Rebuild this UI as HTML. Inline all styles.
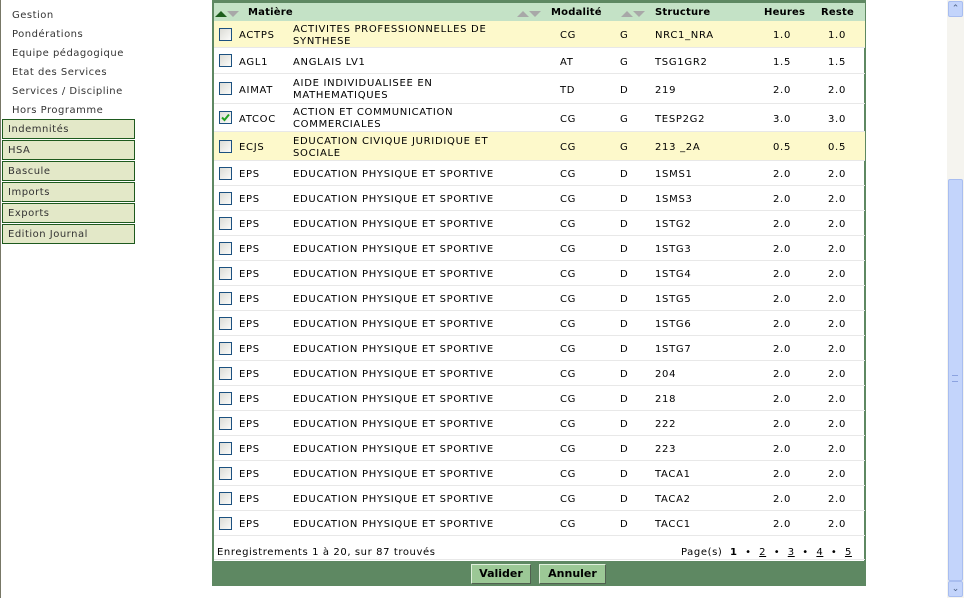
<!DOCTYPE html>
<html><head><meta charset="utf-8"><style>
*{margin:0;padding:0;box-sizing:border-box}
body{width:964px;height:598px;overflow:hidden;background:#fff;font-family:"DejaVu Sans","Liberation Sans",sans-serif;font-size:10px;color:#000;position:relative}
.a{position:absolute;white-space:nowrap}
.lm{position:absolute;left:12px;color:#333;font-size:10px;letter-spacing:.5px;margin-top:2px}
.bx{position:absolute;left:2px;width:133px;height:20px;background:#e3e8c8;border:1px solid #1e5a1e;color:#333;padding:4px 0 0 5px;letter-spacing:.5px}
.row{position:absolute;left:214px;width:651px;border-bottom:1px solid #e8e8e8}
.cb{position:absolute;left:5px;width:13px;height:13px;border:1px solid #1c5180;background:linear-gradient(135deg,#dcdcd6,#fbfbf9)}
.row span{position:absolute;line-height:12px;letter-spacing:.7px;margin-top:2px}
.h{font-weight:bold;font-size:10px;margin-top:2px;letter-spacing:.2px}
.ft{letter-spacing:.6px;margin-top:2px}
.up{display:inline-block;width:0;height:0;border-left:6px solid transparent;border-right:6px solid transparent;border-bottom:6px solid #a8a8a8}
.dn{display:inline-block;width:0;height:0;border-left:6px solid transparent;border-right:6px solid transparent;border-top:6px solid #a8a8a8}
.btn{position:absolute;top:564px;height:20px;background:#9cc896;border:1px solid;border-color:#e0f0dc #506050 #506050 #e0f0dc;font-weight:bold;font-size:11px;text-align:center;line-height:18px}
</style></head><body>
<div class="a" style="left:0;top:0;width:1px;height:598px;background:#777766"></div>
<div class="lm" style="top:8px">Gestion</div>
<div class="lm" style="top:27px">Pondérations</div>
<div class="lm" style="top:46px">Equipe pédagogique</div>
<div class="lm" style="top:65px">Etat des Services</div>
<div class="lm" style="top:84px">Services / Discipline</div>
<div class="lm" style="top:103px">Hors Programme</div>
<div class="bx" style="top:119px">Indemnités</div>
<div class="bx" style="top:140px">HSA</div>
<div class="bx" style="top:161px">Bascule</div>
<div class="bx" style="top:182px">Imports</div>
<div class="bx" style="top:203px">Exports</div>
<div class="bx" style="top:224px">Edition Journal</div>

<div class="a" style="left:212px;top:0;width:654px;height:586px;border-left:2px solid #5e8862;border-right:2px solid #5e8862;background:#fff"></div>
<div class="a" style="left:212px;top:0;width:654px;height:3px;background:#5e8862"></div>
<div class="a" style="left:214px;top:3px;width:651px;height:18px;background:#c4e2c6"></div>
<div class="a" style="left:215px;top:9px"><span class="up" style="border-bottom-color:#1d5e1d"></span><span class="dn"></span></div>
<div class="a h" style="left:248px;top:5px">Matière</div>
<div class="a" style="left:517px;top:9px"><span class="up"></span><span class="dn"></span></div>
<div class="a h" style="left:551px;top:5px">Modalité</div>
<div class="a" style="left:621px;top:9px"><span class="up"></span><span class="dn"></span></div>
<div class="a h" style="left:655px;top:5px">Structure</div>
<div class="a h" style="left:764px;top:5px">Heures</div>
<div class="a h" style="left:821px;top:5px">Reste</div>

<div class="row" style="top:21px;height:27px;background:#fdf9cb"><div class="cb" style="top:7px"></div><span style="left:25px;top:7px">ACTPS</span><span style="left:79px;top:1px">ACTIVITES PROFESSIONNELLES DE<br>SYNTHESE</span><span style="left:346px;top:7px">CG</span><span style="left:406px;top:7px">G</span><span style="left:441px;top:7px">NRC1_NRA</span><span style="left:559px;top:7px">1.0</span><span style="left:614px;top:7px">1.0</span></div>
<div class="row" style="top:48px;height:26px"><div class="cb" style="top:6px"></div><span style="left:25px;top:7px">AGL1</span><span style="left:79px;top:7px">ANGLAIS LV1</span><span style="left:346px;top:7px">AT</span><span style="left:406px;top:7px">G</span><span style="left:441px;top:7px">TSG1GR2</span><span style="left:559px;top:7px">1.5</span><span style="left:614px;top:7px">1.5</span></div>
<div class="row" style="top:74px;height:30px"><div class="cb" style="top:8px"></div><span style="left:25px;top:9px">AIMAT</span><span style="left:79px;top:2px">AIDE INDIVIDUALISEE EN<br>MATHEMATIQUES</span><span style="left:346px;top:9px">TD</span><span style="left:406px;top:9px">D</span><span style="left:441px;top:9px">219</span><span style="left:559px;top:9px">2.0</span><span style="left:614px;top:9px">2.0</span></div>
<div class="row" style="top:104px;height:28px"><div class="cb" style="top:7px"><svg width="11" height="11" style="position:absolute;left:0;top:0"><path d="M2 5.5 L4.5 8 L9 2.5" stroke="#21a121" stroke-width="2" fill="none"/></svg></div><span style="left:25px;top:8px">ATCOC</span><span style="left:79px;top:1px">ACTION ET COMMUNICATION<br>COMMERCIALES</span><span style="left:346px;top:8px">CG</span><span style="left:406px;top:8px">G</span><span style="left:441px;top:8px">TESP2G2</span><span style="left:559px;top:8px">3.0</span><span style="left:614px;top:8px">3.0</span></div>
<div class="row" style="top:132px;height:29px;background:#fdf9cb"><div class="cb" style="top:8px"></div><span style="left:25px;top:8px">ECJS</span><span style="left:79px;top:2px">EDUCATION CIVIQUE JURIDIQUE ET<br>SOCIALE</span><span style="left:346px;top:8px">CG</span><span style="left:406px;top:8px">G</span><span style="left:441px;top:8px">213 _2A</span><span style="left:559px;top:8px">0.5</span><span style="left:614px;top:8px">0.5</span></div>

<div class="row" style="top:161px;height:25px"><div class="cb" style="top:6px"></div><span style="left:25px;top:6px">EPS</span><span style="left:79px;top:6px">EDUCATION PHYSIQUE ET SPORTIVE</span><span style="left:346px;top:6px">CG</span><span style="left:406px;top:6px">D</span><span style="left:441px;top:6px">1SMS1</span><span style="left:559px;top:6px">2.0</span><span style="left:614px;top:6px">2.0</span></div>
<div class="row" style="top:186px;height:25px"><div class="cb" style="top:6px"></div><span style="left:25px;top:6px">EPS</span><span style="left:79px;top:6px">EDUCATION PHYSIQUE ET SPORTIVE</span><span style="left:346px;top:6px">CG</span><span style="left:406px;top:6px">D</span><span style="left:441px;top:6px">1SMS3</span><span style="left:559px;top:6px">2.0</span><span style="left:614px;top:6px">2.0</span></div>
<div class="row" style="top:211px;height:25px"><div class="cb" style="top:6px"></div><span style="left:25px;top:6px">EPS</span><span style="left:79px;top:6px">EDUCATION PHYSIQUE ET SPORTIVE</span><span style="left:346px;top:6px">CG</span><span style="left:406px;top:6px">D</span><span style="left:441px;top:6px">1STG2</span><span style="left:559px;top:6px">2.0</span><span style="left:614px;top:6px">2.0</span></div>
<div class="row" style="top:236px;height:25px"><div class="cb" style="top:6px"></div><span style="left:25px;top:6px">EPS</span><span style="left:79px;top:6px">EDUCATION PHYSIQUE ET SPORTIVE</span><span style="left:346px;top:6px">CG</span><span style="left:406px;top:6px">D</span><span style="left:441px;top:6px">1STG3</span><span style="left:559px;top:6px">2.0</span><span style="left:614px;top:6px">2.0</span></div>
<div class="row" style="top:261px;height:25px"><div class="cb" style="top:6px"></div><span style="left:25px;top:6px">EPS</span><span style="left:79px;top:6px">EDUCATION PHYSIQUE ET SPORTIVE</span><span style="left:346px;top:6px">CG</span><span style="left:406px;top:6px">D</span><span style="left:441px;top:6px">1STG4</span><span style="left:559px;top:6px">2.0</span><span style="left:614px;top:6px">2.0</span></div>
<div class="row" style="top:286px;height:25px"><div class="cb" style="top:6px"></div><span style="left:25px;top:6px">EPS</span><span style="left:79px;top:6px">EDUCATION PHYSIQUE ET SPORTIVE</span><span style="left:346px;top:6px">CG</span><span style="left:406px;top:6px">D</span><span style="left:441px;top:6px">1STG5</span><span style="left:559px;top:6px">2.0</span><span style="left:614px;top:6px">2.0</span></div>
<div class="row" style="top:311px;height:25px"><div class="cb" style="top:6px"></div><span style="left:25px;top:6px">EPS</span><span style="left:79px;top:6px">EDUCATION PHYSIQUE ET SPORTIVE</span><span style="left:346px;top:6px">CG</span><span style="left:406px;top:6px">D</span><span style="left:441px;top:6px">1STG6</span><span style="left:559px;top:6px">2.0</span><span style="left:614px;top:6px">2.0</span></div>
<div class="row" style="top:336px;height:25px"><div class="cb" style="top:6px"></div><span style="left:25px;top:6px">EPS</span><span style="left:79px;top:6px">EDUCATION PHYSIQUE ET SPORTIVE</span><span style="left:346px;top:6px">CG</span><span style="left:406px;top:6px">D</span><span style="left:441px;top:6px">1STG7</span><span style="left:559px;top:6px">2.0</span><span style="left:614px;top:6px">2.0</span></div>
<div class="row" style="top:361px;height:25px"><div class="cb" style="top:6px"></div><span style="left:25px;top:6px">EPS</span><span style="left:79px;top:6px">EDUCATION PHYSIQUE ET SPORTIVE</span><span style="left:346px;top:6px">CG</span><span style="left:406px;top:6px">D</span><span style="left:441px;top:6px">204</span><span style="left:559px;top:6px">2.0</span><span style="left:614px;top:6px">2.0</span></div>
<div class="row" style="top:386px;height:25px"><div class="cb" style="top:6px"></div><span style="left:25px;top:6px">EPS</span><span style="left:79px;top:6px">EDUCATION PHYSIQUE ET SPORTIVE</span><span style="left:346px;top:6px">CG</span><span style="left:406px;top:6px">D</span><span style="left:441px;top:6px">218</span><span style="left:559px;top:6px">2.0</span><span style="left:614px;top:6px">2.0</span></div>
<div class="row" style="top:411px;height:25px"><div class="cb" style="top:6px"></div><span style="left:25px;top:6px">EPS</span><span style="left:79px;top:6px">EDUCATION PHYSIQUE ET SPORTIVE</span><span style="left:346px;top:6px">CG</span><span style="left:406px;top:6px">D</span><span style="left:441px;top:6px">222</span><span style="left:559px;top:6px">2.0</span><span style="left:614px;top:6px">2.0</span></div>
<div class="row" style="top:436px;height:25px"><div class="cb" style="top:6px"></div><span style="left:25px;top:6px">EPS</span><span style="left:79px;top:6px">EDUCATION PHYSIQUE ET SPORTIVE</span><span style="left:346px;top:6px">CG</span><span style="left:406px;top:6px">D</span><span style="left:441px;top:6px">223</span><span style="left:559px;top:6px">2.0</span><span style="left:614px;top:6px">2.0</span></div>
<div class="row" style="top:461px;height:25px"><div class="cb" style="top:6px"></div><span style="left:25px;top:6px">EPS</span><span style="left:79px;top:6px">EDUCATION PHYSIQUE ET SPORTIVE</span><span style="left:346px;top:6px">CG</span><span style="left:406px;top:6px">D</span><span style="left:441px;top:6px">TACA1</span><span style="left:559px;top:6px">2.0</span><span style="left:614px;top:6px">2.0</span></div>
<div class="row" style="top:486px;height:25px"><div class="cb" style="top:6px"></div><span style="left:25px;top:6px">EPS</span><span style="left:79px;top:6px">EDUCATION PHYSIQUE ET SPORTIVE</span><span style="left:346px;top:6px">CG</span><span style="left:406px;top:6px">D</span><span style="left:441px;top:6px">TACA2</span><span style="left:559px;top:6px">2.0</span><span style="left:614px;top:6px">2.0</span></div>
<div class="row" style="top:511px;height:25px"><div class="cb" style="top:6px"></div><span style="left:25px;top:6px">EPS</span><span style="left:79px;top:6px">EDUCATION PHYSIQUE ET SPORTIVE</span><span style="left:346px;top:6px">CG</span><span style="left:406px;top:6px">D</span><span style="left:441px;top:6px">TACC1</span><span style="left:559px;top:6px">2.0</span><span style="left:614px;top:6px">2.0</span></div>

<div class="a ft" style="left:217px;top:545px">Enregistrements 1 à 20, sur 87 trouvés</div>
<div class="a ft" style="left:681px;top:545px">Page(s) &nbsp;<b>1</b> &nbsp;• &nbsp;<u>2</u> &nbsp;• &nbsp;<u>3</u> &nbsp;• &nbsp;<u>4</u> &nbsp;• &nbsp;<u>5</u></div>
<div class="a" style="left:214px;top:559px;width:651px;height:1px;background:#e8e8e8"></div>
<div class="a" style="left:212px;top:561px;width:654px;height:25px;background:#5e8862"></div>
<div class="btn" style="left:471px;width:60px">Valider</div>
<div class="btn" style="left:539px;width:67px">Annuler</div>

<div class="a" style="left:947px;top:0;width:17px;height:598px;background:#f5f4ef"></div>
<div class="a" style="left:948px;top:1px;width:15px;height:16px;background:#c3d4fb;border:1px solid #a8bdf0;border-radius:2px;color:#4d6185;font-size:9px;text-align:center;line-height:14px">&#8963;</div>
<div class="a" style="left:948px;top:179px;width:15px;height:402px;background:#c3d4fb;border:1px solid #a8bdf0;border-radius:2px"></div>
<div class="a" style="left:952px;top:375px;width:6px;height:7px;border-top:1px solid #8ca3e0;border-bottom:1px solid #8ca3e0"></div>
<div class="a" style="left:948px;top:581px;width:15px;height:16px;background:#c3d4fb;border:1px solid #a8bdf0;border-radius:2px;color:#4d6185;font-size:9px;text-align:center;line-height:14px">&#8964;</div>
</body></html>
